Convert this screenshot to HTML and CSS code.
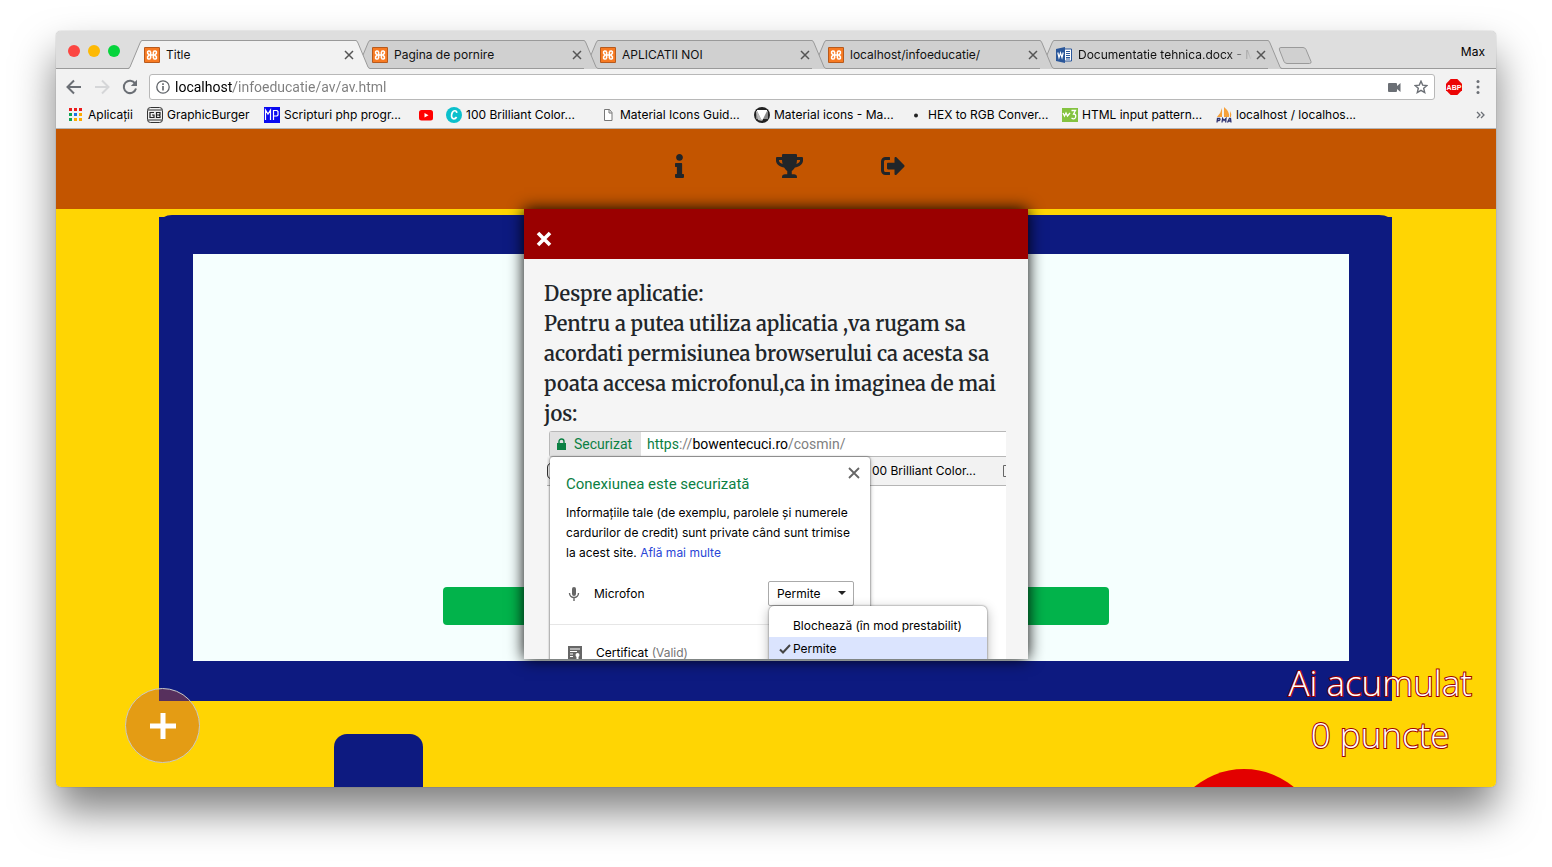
FILE: index.html
```html
<!DOCTYPE html>
<html lang="ro">
<head>
<meta charset="utf-8">
<meta name="viewport" content="width=device-width, initial-scale=1">
<title>Title</title>
<link rel="stylesheet" href="styles.css">
</head>
<body>
<svg class="sprites" aria-hidden="true">
  <symbol id="xampp" viewBox="0 0 16 16">
    <rect width="16" height="16" rx="1" fill="#b85a1c"/><rect x="1" y="1" width="14" height="14" fill="#f77a22"/>
    <path d="M6.800 4.800Q5.800 3.700 4.500 4T3.600 6.200L5 8 3.600 9.800Q3.200 11.700 4.500 12T6.800 11.200M9.200 4.800Q10.200 3.700 11.500 4T12.400 6.200L11 8l1.400 1.800Q12.800 11.700 11.500 12T9.200 11.200M6.600 5v2.300M9.400 5v2.300M6.600 8.700V11M9.400 8.700V11M5 8h6" fill="none" stroke="#fff" stroke-width="1.600"/>
  </symbol>
  <symbol id="cross" viewBox="0 0 10 10"><path d="M1 1l8 8M9 1L1 9" fill="none" stroke="currentColor" stroke-width="1.500"/></symbol>
  <symbol id="edge-left" viewBox="0 0 14 29"><path class="fill" d="M0 29C1.500 29 1.500 28 2 27L12 3Q13 .5 14 .5V29z"/><path class="line" d="M0 28.500Q1.500 28 2 27L12 3Q13 .5 14 .5"/></symbol>
  <symbol id="edge-right" viewBox="0 0 14 29"><path class="fill" d="M14 29C12.500 29 12.500 28 12 27L2 3Q1 .5 0 .5V29z"/><path class="line" d="M14 28.500Q12.500 28 12 27L2 3Q1 .5 0 .5"/></symbol>
</svg>

<div class="window">
  <header class="tabstrip">
    <div class="lights"><button class="light red" aria-label="Close"></button><button class="light amber" aria-label="Minimize"></button><button class="light green" aria-label="Zoom"></button></div>
    <nav class="tabs">
      <div class="tab active"><svg class="edge"><use href="#edge-left"/></svg><div class="tab-face"><svg class="favicon"><use href="#xampp"/></svg><a href="#" class="tab-title">Title</a><button class="tab-close" aria-label="Close tab"><svg><use href="#cross"/></svg></button></div><svg class="edge"><use href="#edge-right"/></svg></div>
      <div class="tab"><svg class="edge"><use href="#edge-left"/></svg><div class="tab-face"><svg class="favicon"><use href="#xampp"/></svg><a href="#" class="tab-title">Pagina de pornire</a><button class="tab-close" aria-label="Close tab"><svg><use href="#cross"/></svg></button></div><svg class="edge"><use href="#edge-right"/></svg></div>
      <div class="tab"><svg class="edge"><use href="#edge-left"/></svg><div class="tab-face"><svg class="favicon"><use href="#xampp"/></svg><a href="#" class="tab-title">APLICATII NOI</a><button class="tab-close" aria-label="Close tab"><svg><use href="#cross"/></svg></button></div><svg class="edge"><use href="#edge-right"/></svg></div>
      <div class="tab"><svg class="edge"><use href="#edge-left"/></svg><div class="tab-face"><svg class="favicon"><use href="#xampp"/></svg><a href="#" class="tab-title">localhost/infoeducatie/</a><button class="tab-close" aria-label="Close tab"><svg><use href="#cross"/></svg></button></div><svg class="edge"><use href="#edge-right"/></svg></div>
      <div class="tab"><svg class="edge"><use href="#edge-left"/></svg><div class="tab-face"><svg class="favicon" viewBox="0 0 16 16"><path d="M8 2h7.500v12H8z" fill="#fff" stroke="#2b579a"/><path d="M10 4.500h4M10 6.500h4M10 8.500h4M10 10.500h4M10 12h4" stroke="#2b579a"/><path d="M0 2l9-2v16l-9-2z" fill="#2b579a"/><path d="M1.800 5.500l1.200 5 1.500-4.500L6 10.500l1.200-5" fill="none" stroke="#fff" stroke-width="1.200"/></svg><a href="#" class="tab-title faded">Documentatie tehnica.docx - M</a><button class="tab-close" aria-label="Close tab"><svg><use href="#cross"/></svg></button></div><svg class="edge"><use href="#edge-right"/></svg></div>
    </nav>
    <button class="new-tab" aria-label="New tab"><svg viewBox="0 0 34 17"><path d="M3 .5h22q2 0 3 2l5 12q.500 2-1.500 2H9q-2 0-3-2L1.500 3Q.5.5 3 .5z" fill="#d0d0d0" stroke="#9a9a9a"/></svg></button>
    <button class="profile">Max</button>
  </header>

  <div class="toolbar">
    <button class="tool" aria-label="Back"><svg viewBox="0 0 16 16"><path d="M15 8H2M8 1.500L1.500 8 8 14.500" fill="none" stroke="#6b6f75" stroke-width="2"/></svg></button>
    <button class="tool" aria-label="Forward" disabled><svg viewBox="0 0 16 16"><path d="M1 8h13M8 1.500L14.500 8 8 14.500" fill="none" stroke="#d5d6d8" stroke-width="2"/></svg></button>
    <button class="tool" aria-label="Reload"><svg viewBox="0 0 16 16"><path d="M13.200 4.500A6.200 6.200 0 1 0 14 9.500" fill="none" stroke="#6b6f75" stroke-width="2"/><path d="M15 .8V7H8.800z" fill="#6b6f75"/></svg></button>
    <div class="omnibox">
      <svg class="glyph" viewBox="0 0 14 14"><circle cx="7" cy="7" r="6.200" fill="none" stroke="#5f6368" stroke-width="1.300"/><path d="M7 6v4.500M7 3.300v1.600" stroke="#5f6368" stroke-width="1.600"/></svg>
      <input class="url" aria-label="Address" value="localhost/infoeducatie/av/av.html">
      <svg class="camera" viewBox="0 0 13 9"><path d="M1 0h7q1 0 1 1v2l3.500-3v9L9 6v2q0 1-1 1H1Q0 9 0 8V1Q0 0 1 0z" fill="#6b6f75"/></svg>
      <svg class="glyph" viewBox="0 0 14 14"><path d="M7 1.200l1.700 3.900 4.200.4-3.200 2.800 1 4.200L7 10.300l-3.700 2.200 1-4.200L1.100 5.500l4.200-.4z" fill="none" stroke="#6b6f75" stroke-width="1.400"/></svg>
    </div>
    <button class="tool abp" aria-label="AdBlock Plus"><svg viewBox="0 0 16 16"><path d="M4.700 0h6.600L16 4.700v6.600L11.300 16H4.700L0 11.300V4.700z" fill="#ec0505"/><text x="8" y="10.500" text-anchor="middle">ABP</text></svg></button>
    <button class="tool" aria-label="Menu"><svg viewBox="0 0 16 16" fill="#6b6f75"><circle cx="8" cy="2.500" r="1.500"/><circle cx="8" cy="8" r="1.500"/><circle cx="8" cy="13.500" r="1.500"/></svg></button>
  </div>

  <nav class="bookmarks">
    <a href="#" class="bookmark apps"><svg viewBox="0 0 16 16"><g fill="#ea1c1c"><path d="M0 1h3v3H0zM5 1h3v3H5zM10 1h3v3h-3z"/></g><path d="M0 6h3v3H0z" fill="#0fa354"/><path d="M5 6h3v3H5z" fill="#1a73e8"/><path d="M10 6h3v3h-3zM5 11h3v3H5zM10 11h3v3h-3z" fill="#fbab00"/><path d="M0 11h3v3H0z" fill="#0fa354"/></svg><span>Aplicații</span></a>
    <a href="#" class="bookmark burger"><svg viewBox="0 0 16 16"><rect x=".5" y=".5" width="15" height="15" rx="3" fill="#eee" stroke="#333"/><path d="M1 3h14M1 13h14" stroke="#333"/><path d="M7 5.500H3v5h4V8H5M9.500 5v6M9 5.500h4v2L12 8l1 .8v1.700H9M10 8h2" fill="none" stroke="#222" stroke-width="1.200"/></svg><span>GraphicBurger</span></a>
    <a href="#" class="bookmark"><svg viewBox="0 0 16 16"><path d="M0 0h16v16H0z" fill="#0a0af0"/><path d="M1.500 13V3l2.500 4 2.500-4v10M9.500 13V3.500h3.500l1 1V8l-1 1H9.500" fill="none" stroke="#fff" stroke-width="1.200"/></svg><span>Scripturi php progr...</span></a>
    <a href="#" class="bookmark video" aria-label="YouTube"><svg viewBox="0 0 16 16"><rect y="3" x="1" width="14" height="10.500" rx="2.500" fill="#f00"/><path d="M6.500 6v4.500l4-2.200z" fill="#fff"/></svg></a>
    <a href="#" class="bookmark"><svg viewBox="0 0 16 16"><circle cx="8" cy="8" r="8" fill="#0bc0cc"/><path d="M10.800 5.800C10.500 3 7.500 3.200 6.300 5.500c-1.600 3-.8 6.300 1.500 6.300 1.200 0 2.200-.8 2.800-1.800" fill="none" stroke="#fff" stroke-width="1.700"/></svg><span>100 Brilliant Color...</span></a>
    <a href="#" class="bookmark"><svg viewBox="0 0 16 16"><path d="M4.500 2.500h5l2.500 3v8H4.500zM9 2.500V6h3" fill="#fff" stroke="#777"/></svg><span>Material Icons Guid...</span></a>
    <a href="#" class="bookmark"><svg viewBox="0 0 16 16"><circle cx="8" cy="8" r="8" fill="#222"/><path d="M2 4h12v8H2z" fill="#888"/><path d="M3 3h10v1L8 14 3 4z" fill="#fff"/><path d="M2 4h1l5 10L4 13z" fill="#bbb"/></svg><span>Material icons - Ma...</span></a>
    <a href="#" class="bookmark"><svg viewBox="0 0 16 16"><circle cx="8" cy="8.500" r="2" fill="#222"/></svg><span>HEX to RGB Conver...</span></a>
    <a href="#" class="bookmark"><svg viewBox="0 0 16 16"><path d="M0 1h16v14H0z" fill="#84c340"/><path d="M1 6l1.500 3L4 6l1.500 3L8 6M9.500 3.500h4L11.500 7q3 0 2 3.500-1.500 2.500-4 .5" fill="none" stroke="#fff" stroke-width="1.300"/></svg><span>HTML input pattern...</span></a>
    <a href="#" class="bookmark"><svg viewBox="0 0 16 16"><path d="M6 1v9H1Q5 6 6 1zM8 0q6 5 5 10H8zM14 4q2 3 1 6h-1z" fill="#f6a03a"/><path d="M1 15.500l.5-4h2.200q.8 1.200-.5 2H1.300M6 15.500l.6-4 1.400 2 2-2-.3 4M11.500 15.500l2-4h1l.5 4M12.500 14h2" fill="none" stroke="#2e3270" stroke-width="1.300"/></svg><span>localhost / localhos...</span></a>
    <button class="overflow" aria-label="More bookmarks"><svg viewBox="0 0 10 8"><path d="M1 1l3 3-3 3M5 1l3 3-3 3" fill="none" stroke="#6b6f75" stroke-width="1.300"/></svg></button>
  </nav>

  <div class="page">
    <nav class="game-nav">
      <a href="#" class="about" aria-label="Info"><svg viewBox="0 0 192 512"><path d="M20 424.229h20V279.771H20c-11.046 0-20-8.954-20-20V212c0-11.046 8.954-20 20-20h112c11.046 0 20 8.954 20 20v212.229h20c11.046 0 20 8.954 20 20V492c0 11.046-8.954 20-20 20H20c-11.046 0-20-8.954-20-20v-47.771c0-11.046 8.954-20 20-20zM96 0C56.235 0 24 32.235 24 72s32.235 72 72 72 72-32.235 72-72S135.764 0 96 0z"/></svg></a>
      <a href="#" aria-label="Trophies"><svg viewBox="0 0 576 512"><path d="M552 64H448V24c0-13.300-10.700-24-24-24H152c-13.300 0-24 10.700-24 24v40H24C10.700 64 0 74.700 0 88v56c0 35.700 22.500 72.400 61.900 100.700 31.500 22.700 69.800 37.100 110 41.700C203.300 338.500 240 360 240 360v72h-48c-35.300 0-64 20.700-64 56v12c0 6.600 5.400 12 12 12h296c6.600 0 12-5.400 12-12v-12c0-35.300-28.700-56-64-56h-48v-72s36.700-21.500 68.100-73.600c40.300-4.600 78.600-19 110-41.700 39.300-28.300 61.900-65 61.900-100.700V88c0-13.300-10.700-24-24-24zM99.300 192.800C74.900 175.200 64 155.600 64 144v-16h64.200c1 32.600 5.800 61.200 12.800 86.200-15.100-5.200-29.200-12.400-41.700-21.400zM512 144c0 16.100-17.700 36.100-35.300 48.800-12.500 9-26.700 16.200-41.800 21.400 7-25 11.800-53.600 12.800-86.200H512v16z"/></svg></a>
      <a href="#" aria-label="Sign out"><svg viewBox="0 0 512 512"><path d="M497 273L329 441c-15 15-41 4.500-41-17v-96H152c-13.300 0-24-10.700-24-24v-96c0-13.300 10.700-24 24-24h136V88c0-21.400 25.900-32 41-17l168 168c9.300 9.400 9.300 24.600 0 34zM192 436v-40c0-6.600-5.400-12-12-12H96c-17.700 0-32-14.300-32-32V160c0-17.700 14.300-32 32-32h84c6.600 0 12-5.400 12-12V76c0-6.600-5.400-12-12-12H96c-53 0-96 43-96 96v192c0 53 43 96 96 96h84c6.600 0 12-5.400 12-12z"/></svg></a>
    </nav>

    <main class="stage">
      <svg class="scene" viewBox="0 0 1440 578" preserveAspectRatio="xMidYMin slice" aria-hidden="true">
        <path d="M0 0h1440v578H0z" fill="#ffd503"/>
        <path d="M103 8h5q3-2 8-2h1207q6 0 9 2h4v484H103z" fill="#0d1a80"/>
        <path d="M137 45h1156v407H137z" fill="#f5fffe"/>
        <rect x="278" y="525" width="89" height="80" rx="13" fill="#0d1a80"/>
        <circle cx="1188" cy="638" r="78" fill="#e30000"/>
      </svg>
      <button class="answer" aria-label="Start"></button>

      <section class="modal" role="dialog" aria-labelledby="about-text">
        <header class="modal-head"><button class="modal-close" aria-label="Close"><svg viewBox="0 0 16 16"><path d="M2 2l12 12M14 2L2 14" fill="none" stroke="#fff" stroke-width="3.600"/></svg></button></header>
        <div class="modal-body">
          <p class="about-text" id="about-text">Despre aplicatie:<br>Pentru a putea utiliza aplicatia ,va rugam sa acordati permisiunea browserului ca acesta sa poata accesa microfonul,ca in imaginea de mai jos:</p>
          <figure class="shot">
            <div class="shot-url"><span class="secure"><svg viewBox="0 0 9 12"><path d="M0 5h9v7H0z"/><path d="M2 5V3.500a2.500 2.500 0 0 1 5 0V5" fill="none" stroke="#0b8043" stroke-width="1.400"/></svg>Securizat</span><span class="address"><span class="scheme">https</span>://<span class="host">bowentecuci.ro</span>/cosmin/</span></div>
            <div class="shot-bar"><svg viewBox="0 0 3 16"><path d="M3 .5Q.5 1.500.5 4v8q0 2.500 2.500 3.500" fill="none" stroke="#333"/></svg><span>00 Brilliant Color...</span><svg viewBox="0 0 3 16"><path d="M3 2.500H.5v11H3" fill="none" stroke="#666"/></svg></div>
            <div class="popup">
              <button class="popup-close" aria-label="Close"><svg viewBox="0 0 12 12"><path d="M1 1l10 10M11 1L1 11" fill="none" stroke="#666" stroke-width="1.800"/></svg></button>
              <h2 class="popup-title">Conexiunea este securizată</h2>
              <p class="popup-text">Informațiile tale (de exemplu, parolele și numerele cardurilor de credit) sunt private când sunt trimise la acest site. <a href="#">Află mai multe</a></p>
              <div class="permission">
                <svg class="mic" viewBox="0 0 12 16"><rect x="4" y="1" width="4" height="9" rx="2" fill="#666"/><path d="M1.500 7a4.500 4.500 0 0 0 9 0M6 11.500V15" fill="none" stroke="#666" stroke-width="1.400"/></svg>
                <label for="mic">Microfon</label>
                <span class="picker"><select id="mic"><option>Permite</option><option>Blochează (în mod prestabilit)</option></select><svg viewBox="0 0 8 4"><path d="M0 0h8L4 4z" fill="#222"/></svg></span>
              </div>
              <div class="certificate"><svg viewBox="0 0 14 14"><path d="M0 0h14v14H0z" fill="#666"/><path d="M2 3h10M2 5.500h7M2 8h3M2 10.500h3" stroke="#fff"/><circle cx="9.500" cy="9" r="2" fill="#fff"/><path d="M8.500 10h2v4l-1-1-1 1z" fill="#fff"/></svg><span class="cert-name">Certificat <span class="muted">(Valid)</span></span></div>
            </div>
            <ul class="menu"><li>Blochează (în mod prestabilit)</li><li class="chosen"><svg viewBox="0 0 12 10"><path d="M1 5.500l3 3L11 1" fill="none" stroke="#444" stroke-width="2"/></svg>Permite</li></ul>
          </figure>
        </div>
      </section>

      <button class="fab" aria-label="Add"><svg viewBox="0 0 26 26"><path d="M0 13h26M13 0v26" stroke="#fff" stroke-width="5"/></svg></button>
      <p class="score">Ai acumulat<br>0 puncte</p>
    </main>
  </div>
</div>
</body>
</html>
```
FILE: styles.css
```css
* { box-sizing: border-box; }
html { height: 100%; }
body { margin: 0; min-height: 100%; display: flex; padding: 31px 56px 80px; background: #fff; color: #000; font: 12px/16px Inter, "Liberation Sans", sans-serif; overflow: hidden; }
button, input, select { font: inherit; color: inherit; margin: 0; padding: 0; border: 0; background: none; }
a { color: inherit; text-decoration: none; }
svg { display: block; flex: none; }
.sprites { position: absolute; width: 0; height: 0; }

.window { flex: 1; min-width: 0; display: flex; flex-direction: column; border-radius: 5px; box-shadow: 0 0 1px rgba(0,0,0,.5), 0 24px 42px rgba(0,0,0,.5); }

.tabstrip { display: flex; align-items: flex-end; height: 38px; background: #dedede; border-bottom: 1px solid #9a9a9a; border-radius: 5px 5px 0 0; }
.lights { display: flex; gap: 8px; align-self: center; padding: 2px 0 0 12px; width: 72px; }
.light { width: 12px; height: 12px; border-radius: 50%; }
.red { background: #fc4642; }
.amber { background: #fdb904; }
.green { background: #06d43c; }
.tabs { display: flex; min-width: 0; margin-bottom: -1px; }
.tab { display: flex; flex: 0 1 242px; width: 242px; min-width: 0; height: 29px; position: relative; color: #d0d0d0; }
.tab + .tab { margin-left: -14px; }
.tab:nth-child(1) { z-index: 5; }
.tab:nth-child(2) { z-index: 4; }
.tab:nth-child(3) { z-index: 3; }
.tab:nth-child(4) { z-index: 2; }
.tab:nth-child(5) { z-index: 1; }
.active { color: #f2f2f2; }
.edge { width: 14px; height: 29px; }
.fill { fill: currentColor; }
.line { fill: none; stroke: #9a9a9a; }
.tab-face { flex: 1; min-width: 0; display: flex; align-items: center; background: currentColor; border-top: 1px solid #9a9a9a; border-bottom: 1px solid #9a9a9a; }
.active .tab-face { border-bottom-color: #f2f2f2; }
.favicon { width: 16px; height: 16px; margin-left: 2px; }
.tab-title { flex: 1; min-width: 0; margin-left: 6px; color: #111; white-space: nowrap; overflow: hidden; }
.faded { -webkit-mask-image: linear-gradient(90deg, #000 86%, transparent); mask-image: linear-gradient(90deg, #000 86%, transparent); }
.tab-close { width: 10px; height: 10px; margin: 0 2px 0 4px; color: #555; }
.tab-close svg { width: 10px; height: 10px; }
.new-tab { margin: 0 0 4px -4px; }
.new-tab svg { width: 34px; height: 17px; }
.profile { margin: 0 11px 8px auto; }

.toolbar { display: flex; align-items: center; gap: 12px; padding: 5px 10px 2px; background: #f2f2f2; }
.tool svg { width: 16px; height: 16px; }
.omnibox { flex: 1; min-width: 0; display: flex; align-items: center; height: 26px; margin: 0 -1px; padding: 0 6px; background: #fff; border: 1px solid #b8b8b8; border-radius: 3px; }
.glyph { width: 14px; height: 14px; }
.url { flex: 1; min-width: 0; height: 20px; margin-left: 5px; font-family: Roboto, "Liberation Sans", sans-serif; font-size: 14px; background: linear-gradient(90deg, #000 58px, #7d7d7d 58px); -webkit-background-clip: text; background-clip: text; color: transparent; outline: 0; }
.camera { width: 13px; height: 9px; margin-right: 13px; }
.abp { margin: 0 -4px 0 0; }
.abp text { font: bold 7px "Liberation Sans", sans-serif; fill: #fff; }

.bookmarks { display: flex; align-items: center; height: 27px; padding: 0 10px 1px 13px; background: #f2f2f2; border-bottom: 1px solid #b5b5b5; }
.bookmark { display: flex; align-items: center; gap: 4px; flex: 0 1 154px; min-width: 0; white-space: nowrap; }
.bookmark svg { width: 16px; height: 16px; }
.apps { flex-basis: 78px; gap: 3px; }
.burger { flex-basis: 117px; }
.video { flex-basis: 28px; }
.overflow { margin-left: auto; }
.overflow svg { width: 10px; height: 8px; }

.page { flex: 1; display: flex; flex-direction: column; }
.game-nav { display: flex; justify-content: center; gap: 78px; padding: 25px 0 31px 27px; background: #c35500; fill: #212529; }
.game-nav svg { height: 24px; }
.about { padding-right: 14px; }
.stage { flex: 1; position: relative; display: flex; justify-content: center; align-items: flex-start; }
.scene { position: absolute; inset: 0; width: 100%; height: 100%; border-radius: 0 0 5px 5px; }
.answer { position: relative; flex: 0 1 666px; height: 38px; margin-top: 378px; background: #02b34b; border-radius: 4px; }

.modal { position: absolute; top: 0; width: 35%; min-width: 504px; overflow: hidden; background: #f5f5f5; box-shadow: 0 0 15px #000; }
.modal-head { display: flex; height: 50px; padding: 22px 12px 0; background: #9a0000; }
.modal-close { height: 16px; }
.modal-close svg { width: 16px; height: 16px; }
.modal-body { padding: 20px 20px 0; }
.about-text { margin: 0; color: #212529; font: 600 20px/30px Merriweather, "Liberation Serif", serif; }
.shot { position: relative; height: 230px; margin: 0 2px 0 3px; padding-top: 2px; overflow: hidden; background: linear-gradient(#f5f5f5 57px, #fff 57px); }
.shot-url { display: flex; height: 26px; margin-left: 2px; background: #fff; border: 1px solid #b8b8b8; border-right: 0; border-radius: 3px 0 0 3px; font-family: Roboto, "Liberation Sans", sans-serif; font-size: 14px; line-height: 24px; color: #808080; }
.secure { display: flex; align-items: center; gap: 8px; width: 91px; padding-left: 7px; background: #e1e1e1; color: #0b8043; fill: #0b8043; }
.secure svg { width: 9px; height: 12px; }
.address { padding-left: 6px; }
.scheme { color: #0b8043; }
.host { color: #000; }
.shot-bar { display: flex; align-items: center; height: 29px; background: #f2f2f2; border-bottom: 1px solid #b5b5b5; }
.shot-bar svg { width: 3px; height: 16px; }
.shot-bar span { flex: 1; padding-left: 322px; }
.popup { position: absolute; left: 3px; top: 28px; width: 320px; height: 220px; padding-top: 17px; background: #fff; border-radius: 3px; box-shadow: 0 0 2px rgba(0,0,0,.7), 0 2px 5px rgba(0,0,0,.3); }
.popup-close { position: absolute; right: 10px; top: 10px; }
.popup-close svg { width: 12px; height: 12px; }
.popup-title { margin: 0 16px 9px; font: 400 15px/20px Roboto, "Liberation Sans", sans-serif; color: #0b8043; }
.popup-text { margin: 0 16px; line-height: 20px; }
.popup-text a { color: #2a46d6; }
.permission { display: flex; align-items: center; padding: 18px 16px; border-bottom: 1px solid #e6e6e6; }
.mic { width: 12px; height: 16px; margin: 0 14px 0 2px; }
.picker { position: relative; margin-left: auto; }
.picker select { appearance: none; width: 86px; height: 25px; padding-left: 8px; border: 1px solid #aaa; border-radius: 2px; background: #fff; }
.picker svg { position: absolute; right: 8px; top: 10px; width: 8px; height: 4px; }
.certificate { display: flex; align-items: center; gap: 14px; padding: 18px; line-height: 20px; }
.certificate svg { width: 14px; height: 14px; }
.muted { color: #757575; }
.menu { position: absolute; left: 222px; top: 177px; width: 218px; margin: 0; padding: 8px 0; list-style: none; background: #fff; border-radius: 5px; box-shadow: 0 0 2px rgba(0,0,0,.6), 0 3px 12px rgba(0,0,0,.3); line-height: 23px; }
.menu li { padding-left: 24px; }
.menu .chosen { display: flex; align-items: center; gap: 2px; padding-left: 10px; background: #dbe4fe; }
.menu svg { width: 12px; height: 10px; }

.fab { position: absolute; left: 69px; bottom: 24px; width: 75px; height: 75px; display: grid; place-items: center; border: 1px solid #c8c8c8; border-radius: 50%; background: rgba(190,79,45,.42); }
.fab svg { width: 26px; height: 26px; }
.score { position: absolute; right: 24px; bottom: 26px; margin: 0; text-align: center; color: #fff; font: 300 35px/52px "Open Sans", "Noto Sans", sans-serif; -webkit-text-stroke: 2px #a00000; paint-order: stroke fill; }
```
